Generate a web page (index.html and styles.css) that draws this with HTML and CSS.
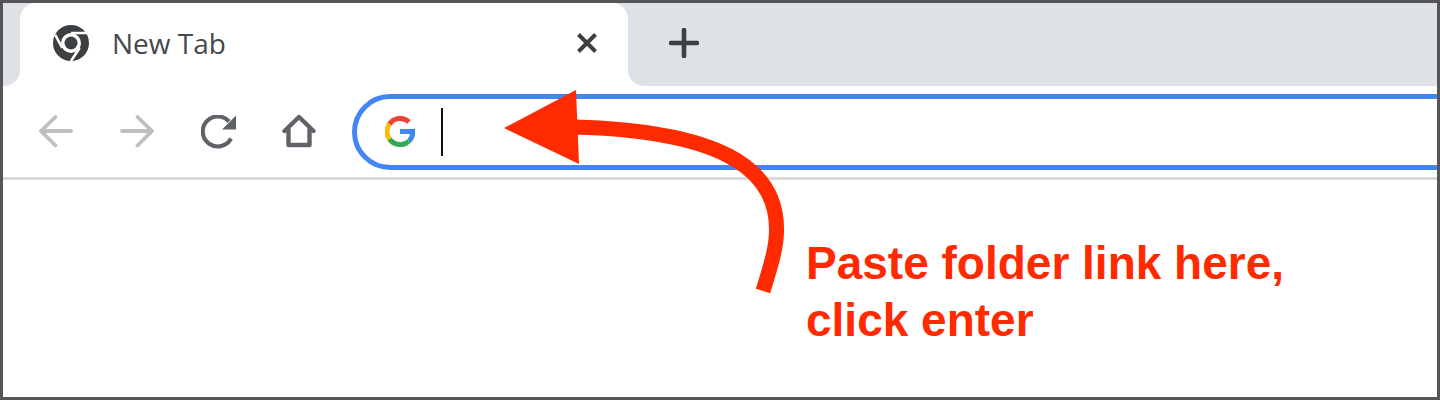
FILE: index.html
```html
<!DOCTYPE html>
<html lang="en">
<head>
  <meta charset="UTF-8" />
  <title>Paste folder link</title>
  <link rel="stylesheet" href="styles.css">
</head>
<body>
  <div class="window">

    <!-- Tabs -->
    <div class="tab-strip">
      <div class="strip-left"></div>
      <div class="tab">
        <svg class="tab-icon" width="36" height="36" viewBox="0 0 36 36">
          <circle cx="18" cy="18" r="18" fill="#3c4043"/>
          <circle cx="18" cy="18" r="10" fill="#fff"/>
          <circle cx="18" cy="18" r="6.5" fill="#3c4043"/>
          <path d="M18 8 L34 8 M9.3 23 L2 9.5 M26.6 23 L18 36" stroke="#fff" stroke-width="2.6" fill="none"/>
        </svg>
        <span class="tab-title">New Tab</span>
        <svg class="tab-close" width="22" height="22" viewBox="0 0 22 22">
          <path d="M2.5 2.5 L19.5 19.5 M19.5 2.5 L2.5 19.5" stroke="#3c4043" stroke-width="4"/>
        </svg>
      </div>
      <div class="strip-right">
        <svg width="30" height="30" viewBox="0 0 30 30">
          <path d="M15 2 V28 M2 15 H28" stroke="#3c4043" stroke-width="4.6" stroke-linecap="round"/>
        </svg>
      </div>
    </div>

    <!-- Toolbar -->
    <div class="toolbar">
      <div class="nav-buttons">
        <svg width="36" height="34" viewBox="0 0 36 34">
          <path d="M32 16 H2.5 M16.5 2 L2 16 L16.5 30.5" stroke="#bdbfc2" stroke-width="3.8" fill="none" stroke-linecap="round" stroke-linejoin="round"/>
        </svg>
        <svg width="36" height="34" viewBox="0 0 36 34">
          <path d="M2 16 H31.5 M17.5 2 L32 16 L17.5 30.5" stroke="#bdbfc2" stroke-width="3.8" fill="none" stroke-linecap="round" stroke-linejoin="round"/>
        </svg>
        <svg width="36" height="34" viewBox="0 0 36 34">
          <path d="M30 23.5 A15 15 0 1 1 28 6.5" stroke="#5f6368" stroke-width="4.2" fill="none"/>
          <path d="M35 0.5 V14.5 H21 Z" fill="#5f6368"/>
        </svg>
        <svg width="36" height="34" viewBox="0 0 36 34">
          <path d="M2.5 16 L17 2 L31.5 16 M6.5 14 V30 H27.5 V14" stroke="#5f6368" stroke-width="4.4" fill="none" stroke-linecap="round" stroke-linejoin="round"/>
        </svg>
      </div>
      <div class="omnibox">
        <svg width="30" height="31" viewBox="0 0 30 31">
          <path d="M27 15.5 H15" stroke="#4285f4" stroke-width="5" fill="none"/>
          <path d="M27.4 13 A13 13 0 0 1 24.2 25" stroke="#4285f4" stroke-width="5" fill="none"/>
          <path d="M24.2 25 A13 13 0 0 1 4.5 23" stroke="#34a853" stroke-width="5" fill="none"/>
          <path d="M4.5 23 A13 13 0 0 1 4.5 8" stroke="#fbbc05" stroke-width="5" fill="none"/>
          <path d="M4.5 8 A13 13 0 0 1 24 6" stroke="#ea4335" stroke-width="5" fill="none"/>
        </svg>
        <span class="caret"></span>
      </div>
    </div>

    <!-- Note -->
    <div class="page">
      <p class="note">Paste folder link here,<br>click enter</p>
    </div>

    <svg class="arrow" width="1440" height="400" viewBox="0 0 1440 400">
      <path d="M763 291 C772 262 777 245 776.5 228 C776 166 716 131 575 127" stroke="#ff2a00" stroke-width="15" fill="none"/>
      <path d="M504 128 L576 90 L579 164 Z" fill="#ff2a00"/>
    </svg>
  </div>
</body>
</html>
```

FILE: styles.css
```css
* {
  box-sizing: border-box;
  margin: 0;
  padding: 0;
}

body {
  background: #fff;
  font-family: 'Liberation Sans', sans-serif;
}

.window {
  position: relative;
  width: 1440px;
  height: 400px;
  border: 3px solid #555;
  background: #fff;
  overflow: hidden;
}

.tab-strip {
  display: flex;
  height: 83px;
  background: linear-gradient(#dee1e6 50%, #fff 50%);
}

.strip-left {
  width: 17px;
  background: #dee1e6;
  border-bottom-right-radius: 16px;
}

.tab {
  display: flex;
  align-items: center;
  width: 608px;
  padding: 0 30px 3px 33px;
  background: #fff;
  border-radius: 16px 16px 0 0;
}

.tab-icon {
  margin-right: 23px;
}

.tab-title {
  flex: 1;
  font-family: 'Open Sans', sans-serif;
  font-size: 28px;
  color: #45484c;
}

.strip-right {
  flex: 1;
  display: flex;
  align-items: center;
  padding: 0 0 3px 41px;
  background: #dee1e6;
  border-bottom-left-radius: 16px;
}

.toolbar {
  display: flex;
  align-items: center;
  height: 94px;
  padding-left: 36px;
  border-bottom: 3px solid #dadada;
}

.nav-buttons {
  display: flex;
  gap: 45px;
  width: 313px;
}

.omnibox {
  display: flex;
  align-items: center;
  flex: 1;
  height: 76px;
  margin-right: -10px;
  padding-left: 28px;
  border: 5px solid #4285f4;
  border-radius: 38px 0 0 38px;
}

.caret {
  width: 2px;
  height: 48px;
  margin-left: 26px;
  background: #111;
}

.page {
  padding: 55px 0 0 803px;
}

.note {
  font-size: 46px;
  line-height: 57px;
  font-weight: bold;
  color: #ff2a00;
}

.arrow {
  position: absolute;
  top: -3px;
  left: -3px;
}
```
